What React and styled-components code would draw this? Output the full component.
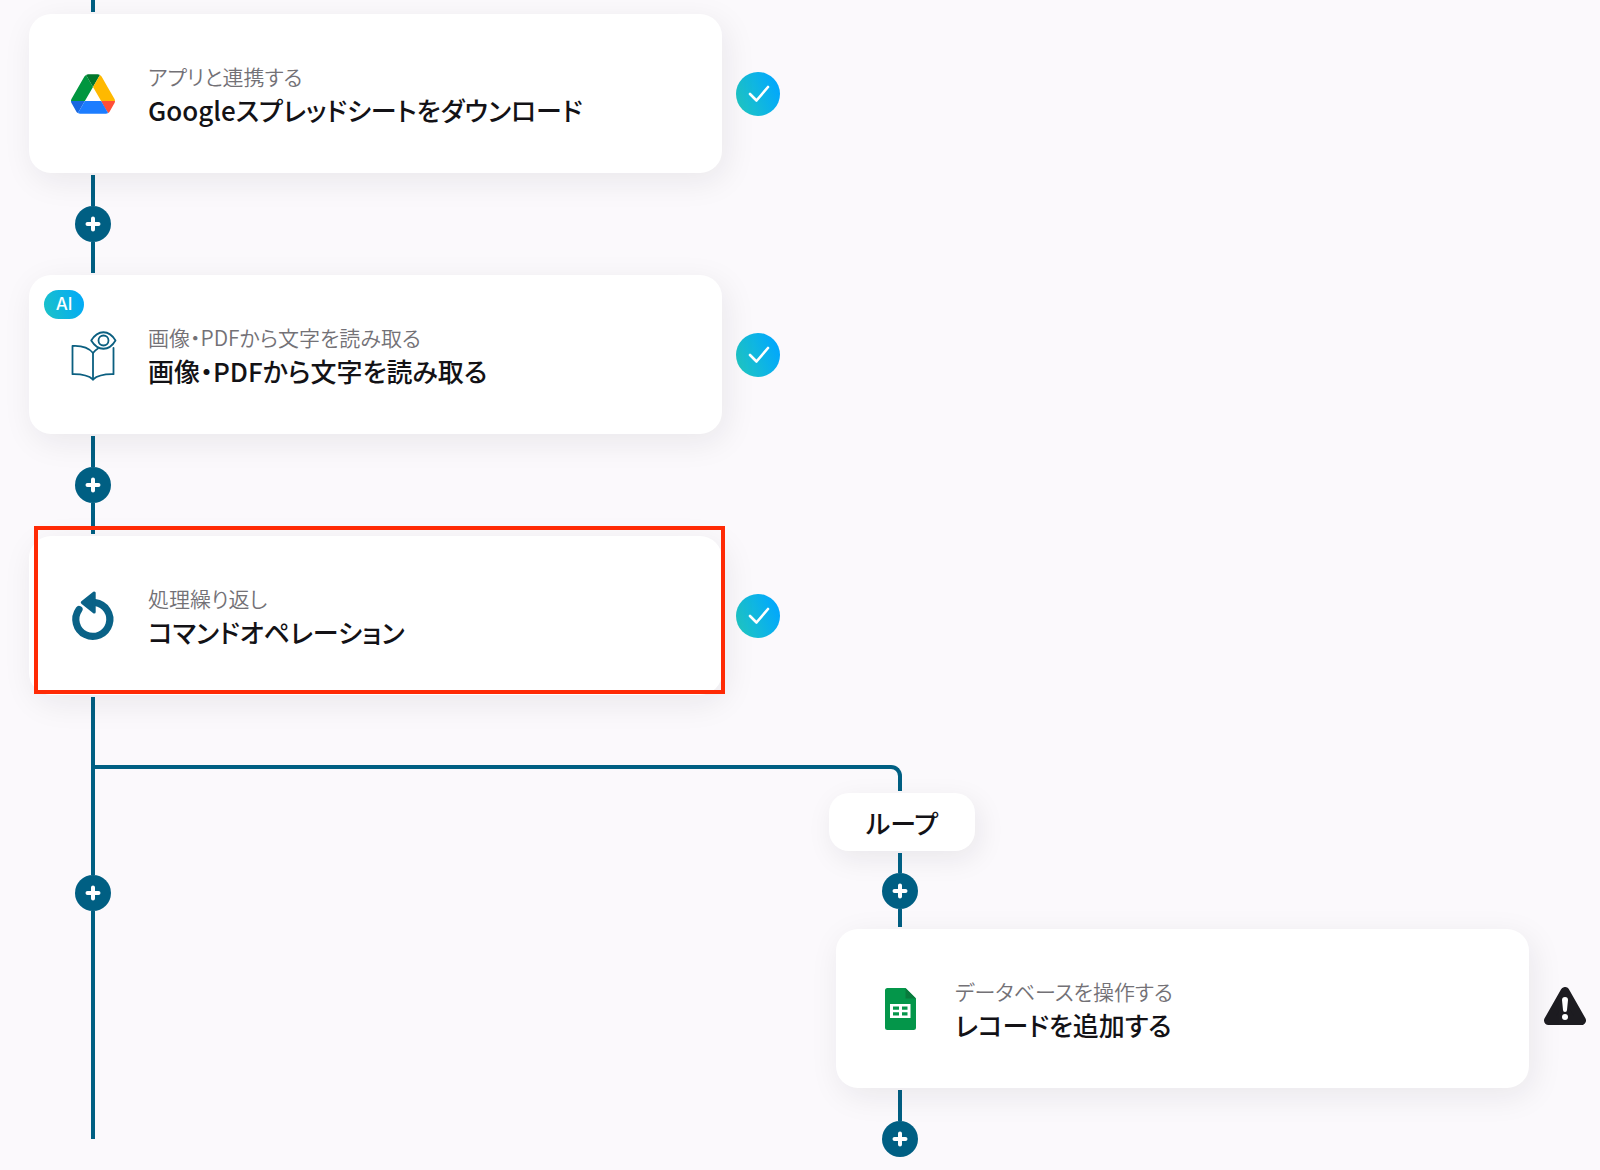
import styled, { createGlobalStyle } from "styled-components";

const GlobalStyle = createGlobalStyle`
  * {
    box-sizing: border-box;
  }
  body {
    margin: 0;
    background: #fbf9fc;
    color: #131216;
    font-family: "Noto Sans CJK JP", "Noto Sans", sans-serif;
    font-feature-settings: "palt";
  }
`;

const Flow = styled.main`
  display: grid;
  grid-template-columns: 1fr 1fr;
  column-gap: 56px;
  padding: 0 13px 12px 29px;
`;

const Column = styled.section`
  display: flex;
  flex-direction: column;
  gap: 2px;
`;

const Connector = styled.div`
  width: 36px;
  margin-left: 46px;
  display: flex;
  flex-direction: column;
  align-items: center;
`;

const Rail = styled.div`
  width: 4px;
  height: ${(props) => props.length}px;
  background-color: #005f83;
`;

const AddButton = styled.button`
  width: 36px;
  height: 36px;
  padding: 0;
  border: none;
  border-radius: 50%;
  background-color: #005f83;
  display: flex;
  align-items: center;
  justify-content: center;
  cursor: pointer;
`;

const StepRow = styled.div`
  display: flex;
  align-items: center;
  gap: 14px;
`;

const Card = styled.article`
  position: relative;
  flex: 1;
  height: 159px;
  padding: 0 40px;
  display: flex;
  align-items: center;
  gap: 31px;
  border-radius: 22px;
  background-color: white;
  box-shadow: 4px 8px 32px rgba(30, 20, 40, 0.08);
`;

const IconSlot = styled.div`
  width: 48px;
  height: 56px;
  display: flex;
  align-items: center;
  justify-content: center;
`;

const Category = styled.p`
  margin: 0;
  font-size: 21px;
  font-weight: 350;
  line-height: 32px;
  color: #737176;
`;

const Title = styled.h2`
  margin: 0;
  font-size: 26px;
  font-weight: 500;
  line-height: 36px;
`;

const AiBadge = styled.span`
  position: absolute;
  top: 15px;
  left: 15px;
  width: 40px;
  height: 29px;
  border-radius: 15px;
  background: linear-gradient(70deg, #1cc3c6, #00a8fb);
  color: white;
  font-family: Inter, sans-serif;
  font-size: 17px;
  font-weight: 500;
  line-height: 29px;
  text-align: center;
`;

const Highlight = styled.div`
  position: absolute;
  top: -10px;
  right: -3px;
  bottom: 1px;
  left: 5px;
  border: 4px solid #ff2a05;
`;

const Status = styled.div`
  width: 44px;
  height: 44px;

  svg {
    display: block;
  }
`;

const MainRail = styled(Connector)`
  grid-row: 2;
  grid-column: 1;
  padding-top: 2px;
`;

const Elbow = styled.div`
  grid-row: 2;
  grid-column: 1 / -1;
  align-self: start;
  width: calc((100% + 56px) / 2 + 4px);
  height: 26px;
  margin: 70px 0 0 62px;
  border: solid #005f83;
  border-width: 4px 4px 0 0;
  border-top-right-radius: 11px;
`;

const Branch = styled(Column)`
  grid-row: 2;
  grid-column: 2;
  padding-top: 98px;
`;

const LoopLabel = styled.div`
  align-self: flex-start;
  height: 58px;
  margin-left: -7px;
  padding: 0 37px;
  border-radius: 20px;
  background-color: white;
  box-shadow: 4px 8px 28px rgba(30, 20, 40, 0.08);
  font-size: 26px;
  font-weight: 500;
  line-height: 60px;
`;

const DriveIcon = () => (
  <svg width="44" height="40" viewBox="0 0 87.3 78" aria-hidden="true">
    <path fill="#1967e0" d="m6.6 66.85 3.85 6.65c.8 1.4 1.95 2.5 3.3 3.3l13.75-23.8h-27.5c0 1.55.4 3.1 1.2 4.5z" />
    <path fill="#00963f" d="m43.65 25-13.75-23.8c-1.35.8-2.5 1.9-3.3 3.3l-25.4 44a9.06 9.06 0 0 0 -1.2 4.5h27.5z" />
    <path fill="#ff4f38" d="m73.55 76.8c1.35-.8 2.5-1.9 3.3-3.3l1.6-2.75 7.65-13.25c.8-1.4 1.2-2.95 1.2-4.5h-27.502l5.852 11.5z" />
    <path fill="#00772c" d="m43.65 25 13.75-23.8c-1.35-.8-2.9-1.2-4.5-1.2h-18.5c-1.6 0-3.15.45-4.5 1.2z" />
    <path fill="#1c7dff" d="m59.8 53h-32.3l-13.75 23.8c1.35.8 2.9 1.2 4.5 1.2h50.8c1.6 0 3.15-.45 4.5-1.2z" />
    <path fill="#ffb900" d="m73.4 26.5-12.7-22c-.8-1.4-1.95-2.5-3.3-3.3l-13.75 23.8 16.15 28h27.45c0-1.55-.4-3.1-1.2-4.5z" />
  </svg>
);

const BookIcon = () => (
  <svg width="48" height="52" viewBox="0 0 48 52" fill="none" stroke="#0b5f80" strokeWidth="1.8" strokeLinejoin="round" strokeLinecap="round" aria-hidden="true">
    <path d="M24 24C19 18 12 16.5 3.5 17V45.2C12 45 19 46 24 50.5C29 46 36 45 44.5 45.2V19" />
    <path d="M24 50.5V24C25.5 22 27 20.5 29 19.5" />
    <path d="M22.2 11.500C29 0.500 40 0.500 46.500 11.500C40 22.500 29 22.500 22.200 11.500Z" />
    <circle cx="34.5" cy="11.5" r="5" />
  </svg>
);

const LoopIcon = () => (
  <svg width="48" height="56" viewBox="0 0 48 56" fill="none" stroke="#0a6287" aria-hidden="true">
    <path d="M10 21.5A17 17 0 1 0 26 14.5" strokeWidth="7.2" strokeLinecap="round" />
    <path d="M25.2 5V24L13.3 14.5Z" fill="#0a6287" strokeWidth="3" strokeLinejoin="round" />
  </svg>
);

const SheetsIcon = () => (
  <svg width="31" height="42" viewBox="0 0 31 42" aria-hidden="true">
    <path fill="#04964a" d="M2.5 0H20.5L31 10.5V39.5A2.5 2.5 0 0 1 28.5 42H2.5A2.5 2.5 0 0 1 0 39.5V2.5A2.5 2.5 0 0 1 2.5 0Z" />
    <path fill="#087a3c" d="M20.5 0L31 10.5H20.5Z" />
    <path fill="white" fillRule="evenodd" d="M5 16H25.500V30H5ZM8 18.500V21.700H14V18.500ZM17 18.500V21.700H22.500V18.500ZM8 24.200V27.500H14V24.200ZM17 24.200V27.500H22.500V24.200Z" />
  </svg>
);

const CheckIcon = () => (
  <svg width="44" height="44" viewBox="0 0 44 44" role="img" aria-label="完了">
    <defs>
      <linearGradient id="done" x1="0" y1="0.7" x2="1" y2="0.3">
        <stop offset="0" stopColor="#1fc6c3" />
        <stop offset="1" stopColor="#00a6ff" />
      </linearGradient>
    </defs>
    <circle cx="22" cy="22" r="22" fill="url(#done)" />
    <path d="M14 22L20.5 28.5L32 15" fill="none" stroke="white" strokeWidth="2.6" strokeLinecap="round" strokeLinejoin="round" />
  </svg>
);

const WarningIcon = () => (
  <svg width="44" height="39" viewBox="0 0 44 39" role="img" aria-label="警告">
    <path d="M22 4.5L38.500 33.500H5.500Z" fill="#1d1c21" stroke="#1d1c21" strokeWidth="9" strokeLinejoin="round" />
    <path d="M19 13A3 3 0 0 1 25 13L24 23A2 2 0 0 1 20 23Z" fill="white" />
    <circle cx="22" cy="30" r="3" fill="white" />
  </svg>
);

const AddStep = () => (
  <AddButton type="button" aria-label="ステップを追加">
    <svg width="16" height="16" viewBox="0 0 16 16" stroke="white" strokeWidth="4" strokeLinecap="round" aria-hidden="true">
      <path d="M8 2.5V13.5M2.5 8H13.5" />
    </svg>
  </AddButton>
);

const Join = ({ before, after }) => (
  <Connector>
    <Rail length={before} />
    <AddStep />
    {after && <Rail length={after} />}
  </Connector>
);

const Step = ({ icon, category, title, status, ai, selected }) => (
  <StepRow>
    <Card>
      {ai && <AiBadge>AI</AiBadge>}
      <IconSlot>{icon}</IconSlot>
      <div>
        <Category>{category}</Category>
        <Title>{title}</Title>
      </div>
      {selected && <Highlight />}
    </Card>
    <Status>{status === "done" ? <CheckIcon /> : <WarningIcon />}</Status>
  </StepRow>
);

const App = () => {
  return (
    <>
      <GlobalStyle />
      <Flow>
        <Column>
          <Connector>
            <Rail length={12} />
          </Connector>
          <Step
            icon={<DriveIcon />}
            category="アプリと連携する"
            title="Googleスプレッドシートをダウンロード"
            status="done"
          />
          <Join before={31} after={31} />
          <Step
            icon={<BookIcon />}
            category="画像・PDFから文字を読み取る"
            title="画像・PDFから文字を読み取る"
            status="done"
            ai
          />
          <Join before={31} after={31} />
          <Step
            icon={<LoopIcon />}
            category="処理繰り返し"
            title="コマンドオペレーション"
            status="done"
            selected
          />
        </Column>
        <Elbow />
        <MainRail>
          <Rail length={178} />
          <AddStep />
          <Rail length={228} />
        </MainRail>
        <Branch>
          <LoopLabel>ループ</LoopLabel>
          <Join before={20} after={18} />
          <Step
            icon={<SheetsIcon />}
            category="データベースを操作する"
            title="レコードを追加する"
            status="warning"
          />
          <Join before={31} />
        </Branch>
      </Flow>
    </>
  );
};

export default App;
